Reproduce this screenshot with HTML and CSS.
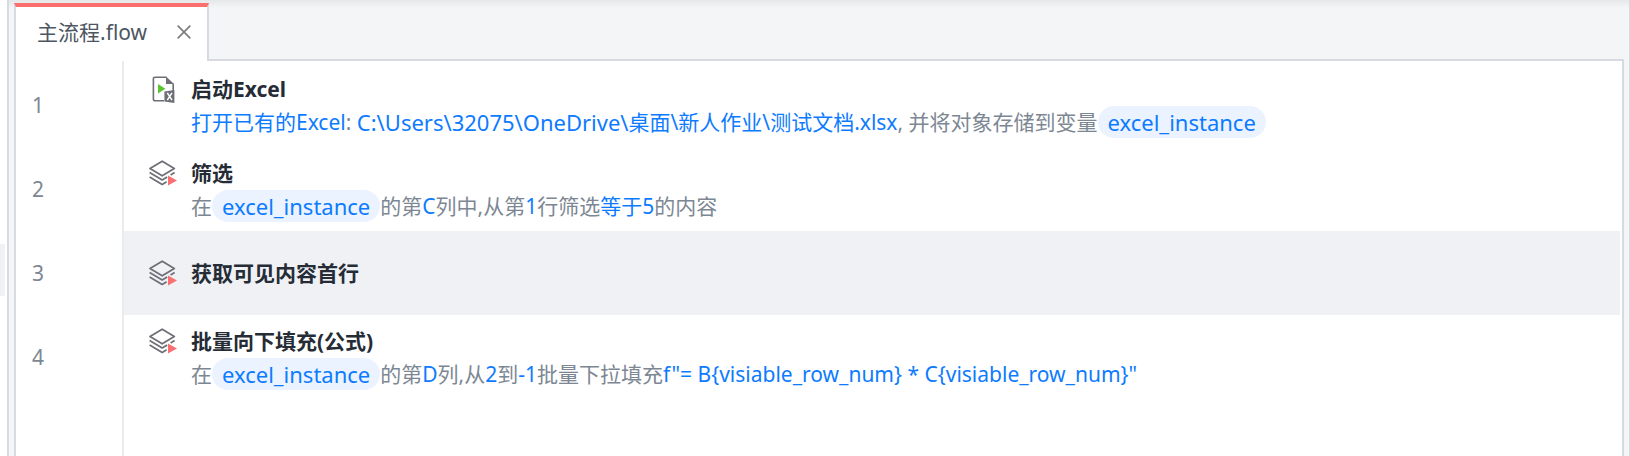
FILE: index.html
```html
<!DOCTYPE html>
<html lang="zh-CN">
<head>
<meta charset="utf-8">
<title>主流程.flow</title>
<link rel="stylesheet" href="styles.css">
</head>
<body>
<svg class="symbols" aria-hidden="true">
  <symbol id="layers" viewBox="0 0 28 26">
    <g fill="none" stroke="#6d6e76" stroke-width="1.7" stroke-linejoin="round">
      <path d="M13.2 1.2 25.3 8.6 13.2 15.8 1 8.6Z"/>
      <path d="M.6 12.6 13.2 20 18.2 17.1M21.6 15 25.6 12.6"/>
      <path d="M.6 17 13.2 24.4 17.6 21.8"/>
    </g>
    <path d="M19 15.6v9.8L28 20.5Z" fill="#fa7070"/>
  </symbol>
</svg>
<div class="app">
  <aside class="side"><div class="side-item"></div></aside>
  <main class="editor">
    <nav class="tabs">
      <div class="tab">
        <a class="tab-name" href="#flow">主流程.flow</a>
        <button class="close" type="button" aria-label="关闭">
          <svg viewBox="0 0 14 14" width="14" height="14"><path d="M.7.7 13.3 13.3M13.3.7.7 13.3" stroke="#808080" stroke-width="1.8"/></svg>
        </button>
      </div>
      <div class="tab-rest"></div>
    </nav>
    <ol class="flow" id="flow">
      <li class="step">
        <span class="num">1</span>
        <div class="body">
          <svg class="icon" viewBox="0 0 28 28">
            <path d="M17.5 2.2H6a1.6 1.6 0 0 0-1.6 1.6v20.4A1.6 1.6 0 0 0 6 25.8h9M24.2 8.5v8" fill="none" stroke="#6d6e76" stroke-width="1.6"/>
            <path d="M17 1.4 25 9H17Z" fill="#6d6e76"/>
            <path d="M9 9v9.6l7.4-4.8Z" fill="#5cc433"/>
            <path d="M15.4 16.6 25.4 15v13l-10-1.4Z" fill="#6d6e76"/>
            <path d="M18.3 17.8 23 25.2M23 17.8 18.3 25.2" stroke="#fff" stroke-width="1.5"/>
          </svg>
          <div class="text">
            <h2>启动Excel</h2>
            <p><b>打开已有的Excel</b>: <b class="path">C:\Users\32075\OneDrive\</b><b>桌面\新人作业\测试文档.xlsx</b>, 并将对象存储到变量<span class="pill">excel_instance</span></p>
          </div>
        </div>
      </li>
      <li class="step">
        <span class="num">2</span>
        <div class="body">
          <svg class="icon"><use href="#layers"/></svg>
          <div class="text">
            <h2>筛选</h2>
            <p>在<span class="pill">excel_instance</span>的第<b>C</b>列中,从第<b>1</b>行筛选<b>等于5</b>的内容</p>
          </div>
        </div>
      </li>
      <li class="step selected">
        <span class="num">3</span>
        <div class="body">
          <svg class="icon"><use href="#layers"/></svg>
          <div class="text"><h2>获取可见内容首行</h2></div>
        </div>
      </li>
      <li class="step">
        <span class="num">4</span>
        <div class="body">
          <svg class="icon"><use href="#layers"/></svg>
          <div class="text">
            <h2>批量向下填充(公式)</h2>
            <p>在<span class="pill">excel_instance</span>的第<b>D</b>列,从<b>2</b>到<b>-1</b>批量下拉填充<b>f"= B{visiable_row_num} * C{visiable_row_num}"</b></p>
          </div>
        </div>
      </li>
      <li class="filler"></li>
    </ol>
  </main>
</div>
</body>
</html>
```
FILE: styles.css
```css
* { box-sizing: border-box; }
body {
  margin: 0;
  font: 21px/33px "Noto Sans", "Noto Sans CJK SC", sans-serif;
  color: #7d8793;
}
.symbols { position: absolute; width: 0; height: 0; }
.app {
  display: flex;
  min-height: 100vh;
  background: linear-gradient(#e6e7e9, #f4f5f7 8px);
  border-right: 1px solid #d8dae3;
}
.side {
  width: 9px;
  flex: none;
  padding-top: 244px;
  background: #fff;
  border-right: 2px solid #d8dae3;
}
.side-item { width: 5px; height: 52px; background: #f0f1f5; }
.editor {
  flex: 1;
  display: flex;
  flex-direction: column;
  margin: 3px 5px 0 5px;
}
.tabs { display: flex; height: 58px; }
.tab {
  display: flex;
  align-items: center;
  gap: 30px;
  padding: 0 16px 4px 21px;
  background: #fff;
  border: 2px solid #d8dae3;
  border-top: 4px solid #fa6e6e;
  border-bottom: 0;
}
.tab-name { color: #4d5661; text-decoration: none; white-space: nowrap; }
.close { display: flex; padding: 0; border: 0; background: none; }
.tab-rest { flex: 1; border-bottom: 2px solid #d8dae3; }
.flow {
  flex: 1;
  display: flex;
  flex-direction: column;
  margin: 0;
  padding: 0 2px 0 0;
  list-style: none;
  background: #fff;
  border: solid #d8dae3;
  border-width: 0 2px;
}
.step { display: flex; height: 84px; }
.step:first-child { height: 86px; }
.step:first-child > * { padding-top: 12px; }
.num {
  display: flex;
  align-items: center;
  width: 106px;
  padding-left: 16px;
}
.step:first-child .num { padding-top: 2px; }
.body {
  flex: 1;
  display: flex;
  gap: 14px;
  padding: 10px 0 0 25px;
  border-left: 2px solid #eaebec;
}
.icon { width: 28px; height: 26px; margin-top: 3px; flex: none; }
.step:first-child .icon { height: 28px; margin-top: 2px; }
.text { white-space: nowrap; }
h2 { margin: 0; font-size: 21px; line-height: 33px; color: #252c35; }
p { display: flex; margin: 0; white-space: pre; }
b { font-weight: 400; color: #0d7bff; }
.path { font-size: 22px; }
.pill {
  height: 32px;
  padding: 0 10px;
  border-radius: 16px;
  background: #eaf3ff;
  color: #0d7bff;
  font-size: 22px;
}
.selected .body { align-items: center; padding-top: 0; background: #f0f1f5; }
.selected .icon { margin: 0; }
.filler { flex: 1; margin-left: 106px; border-left: 2px solid #eaebec; }
```
